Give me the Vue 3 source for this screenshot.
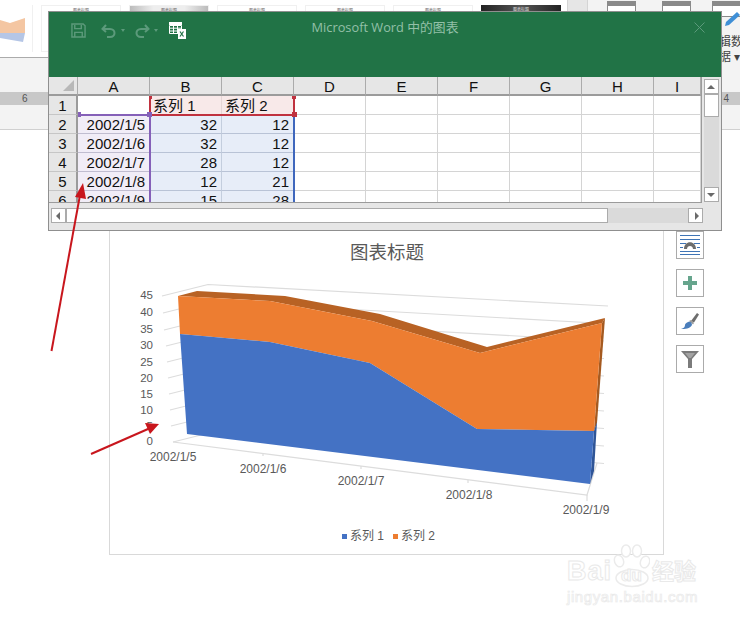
<script setup>
const columns = ['A', 'B', 'C', 'D', 'E', 'F', 'G', 'H', 'I']

const rows = [
  ['', '系列 1', '系列 2'],
  ['2002/1/5', 32, 12],
  ['2002/1/6', 32, 12],
  ['2002/1/7', 28, 12],
  ['2002/1/8', 12, 21],
  ['2002/1/9', 15, 28]
]

function cellClass(r, c) {
  const list = []
  if (r === 0 && (c === 1 || c === 2)) list.push('tint-red')
  if (r > 0 && c === 0) list.push('tint-purple')
  if (r > 0 && (c === 1 || c === 2)) list.push('tint-blue')
  if (r > 0 && c < 3) list.push('num')
  return list
}

const thumbs = [0, 1, 2, 3, 4, 5]

const wallLines = [0, 1, 2, 3, 4, 5, 6, 7, 8, 9]
const yLabels = [
  ['45', 299], ['40', 316], ['35', 333], ['30', 349], ['25', 366],
  ['20', 382], ['15', 398], ['10', 414], ['5', 430], ['0', 445]
]
const yTicks = [
  [162, 296], [163, 313], [164, 330], [166, 346], [167, 362],
  [168, 378], [169, 394], [170, 410], [171, 426], [173, 442]
]
const xLabels = [
  ['2002/1/5', 173, 461], ['2002/1/6', 263, 473], ['2002/1/7', 361, 485],
  ['2002/1/8', 469, 499], ['2002/1/9', 586, 514]
]
</script>

<template>
  <div class="page">
    <!-- ribbon behind the dialog -->
    <div class="ribbon">
      <div class="gallery">
        <div class="thumb first">
          <svg width="33" height="47" viewBox="0 0 33 47">
            <polygon points="0,15 10,18 25,13 25,28 0,28" fill="#f4c6a2" />
            <polygon points="0,28 25,28 23,37 0,33" fill="#b5c6e6" />
          </svg>
        </div>
        <div v-for="t in thumbs" :key="t" class="thumb" :class="{ grey: t === 1, dark: t === 5 }">
          <span>图表标题</span>
        </div>
      </div>
      <div class="ribbon-right">
        <div class="gallery-scroll"><i class="mini-up"></i></div>
        <div class="tool tool-a"><i class="tool-icon"></i></div>
        <div class="tool tool-b"><i class="tool-icon"></i></div>
        <div class="tool tool-c">
          <i class="tool-icon"></i>
          <svg class="pencil" width="17" height="16" viewBox="0 0 17 16">
            <path d="M13 1l3 3L5 14l-4 1 1-4z" fill="#3f8fd6" />
          </svg>
          <span class="tool-label">辑数</span>
          <span class="tool-label">据 ▾</span>
        </div>
      </div>
    </div>
    <div class="ruler">
      <span class="ruler-left">6</span>
      <span class="ruler-right">4</span>
    </div>
    <div class="ribbon-under"></div>

    <!-- document with the chart -->
    <div class="doc">
      <div class="chart-card">
        <svg class="chart" width="553" height="353" viewBox="110 201 553 353">
          <!-- back wall and floor -->
          <g stroke="#dcdcdc" stroke-width="1.2" fill="none">
            <polyline v-for="i in wallLines" :key="i" :points="`${yTicks[i][0]},${yTicks[i][1]} ${yTicks[i][0] + 46},${yTicks[i][1] - 11.5} ${i ? 604 : 608},${306 + i * 17.5}`" />
            <polyline points="173,442 587,495 597,463" />
            <polyline points="263,453 263,456" />
            <polyline points="361,466 361,469" />
            <polyline points="468,480 468,483" />
            <polyline points="587,495 587,501" />
          </g>
          <!-- series -->
          <polygon points="178,296 197,291 285,296 380,314 487,347 605,318 602,323 480,353 372,321 270,301" fill="#b86224" />
          <polygon points="605,318 597,423 594,431 602,323" fill="#a55a20" />
          <polygon points="594,431 597,422 594,471 590,484" fill="#2f5597" />
          <polygon points="178,296 270,301 372,321 480,353 602,323 594,431 477,429 370,363 270,342 180,334" fill="#ed7d31" />
          <polygon points="180,334 270,342 370,363 477,429 594,431 590,484 187,434" fill="#4472c4" />
          <!-- labels -->
          <text x="387" y="259" class="chart-title" text-anchor="middle">图表标题</text>
          <text v-for="l in yLabels" :key="l[0]" :x="153" :y="l[1]" class="tick-y" text-anchor="end">{{ l[0] }}</text>
          <text v-for="l in xLabels" :key="l[0]" :x="l[1]" :y="l[2]" class="tick" text-anchor="middle">{{ l[0] }}</text>
          <rect x="342" y="534" width="5" height="5" fill="#4472c4" />
          <text x="350" y="540" class="tick">系列 1</text>
          <rect x="393" y="534" width="5" height="5" fill="#ed7d31" />
          <text x="401" y="540" class="tick">系列 2</text>
        </svg>
      </div>

      <div class="side-buttons">
        <button class="side-btn">
          <svg width="22" height="22" viewBox="0 0 22 22">
            <path d="M1 1.500h20M1 5.500h20M1 9.500h6M15 9.500h6M1 13.500h3M18 13.500h3M1 17.500h20M1 20.500h20" stroke="#3f74b5" stroke-width="1" fill="none" />
            <path d="M5 15c0-9 12-9 12 0h-3c0-4-6-4-6 0z" fill="#6d6d6d" />
          </svg>
        </button>
        <button class="side-btn">
          <svg width="16" height="16" viewBox="0 0 16 16">
            <path d="M6 1h4v5h5v4h-5v5H6v-5H1V6h5z" fill="#66a58d" />
          </svg>
        </button>
        <button class="side-btn">
          <svg width="20" height="20" viewBox="0 0 20 20">
            <path d="M11 10L17 2l2 1.500-5 8z" fill="#6d6d6d" />
            <path d="M9 10l2-1 3 3-1 1.500z" fill="#9a9a9a" />
            <path d="M8 11c2-1 4 0 4 3-2 4-7 4-11 4 3-1 4-2 4-4 0-1 1-2 3-3z" fill="#4a7ebb" />
          </svg>
        </button>
        <button class="side-btn">
          <svg width="20" height="20" viewBox="0 0 20 20">
            <path d="M1 2h18l-7 8v9H8v-9z" fill="#7b7b7b" />
            <path d="M5 4l4 5h2l4-5z" fill="#a3a3a3" />
          </svg>
        </button>
      </div>
    </div>

    <!-- excel data window -->
    <div class="dialog">
      <div class="titlebar">
        <div class="quick">
          <svg width="15" height="15" viewBox="0 0 16 16">
            <path d="M1 1h12l2 2v12H1zM4 2v4h7V2M4 15v-5h8v5" fill="none" stroke="#5c9a7b" stroke-width="1.500" />
          </svg>
          <svg class="undo" width="16" height="14" viewBox="0 0 16 14">
            <path d="M5 1L1.500 5 5 8M2 5h7c6 0 6 8 0 8H6" fill="none" stroke="#5c9a7b" stroke-width="2" />
          </svg>
          <i class="caret"></i>
          <svg class="redo" width="16" height="14" viewBox="0 0 16 14">
            <path d="M11 1l3.500 4L11 8M14 5H7c-6 0-6 8 0 8h3" fill="none" stroke="#5c9a7b" stroke-width="2" />
          </svg>
          <i class="caret"></i>
          <svg class="sheet-icon" width="17" height="17" viewBox="0 0 17 17">
            <path d="M0 0h13v3H0z" fill="#fff" />
            <path d="M.5 3.500h12v8H.5zM.5 6.200h12M.5 9h12M4.500 3.500v8M8.500 3.500v8" fill="none" stroke="#fff" />
            <rect x="9" y="7" width="8" height="10" fill="#fff" />
            <path d="M11 9.500l3.500 5M14.500 9.500l-3.500 5" stroke="#217346" stroke-width="1.200" />
          </svg>
        </div>
        <div class="win-title">Microsoft Word 中的图表</div>
        <svg class="close" width="11" height="11" viewBox="0 0 11 11">
          <path d="M.5.5l10 10M10.500.5l-10 10" stroke="#5c9a7b" stroke-width="1" />
        </svg>
      </div>

      <div class="sheet-row">
        <div class="sheet">
          <div class="grid">
            <div class="corner"><i></i></div>
            <div v-for="c in columns" :key="c" class="col-head">{{ c }}</div>
            <template v-for="(row, r) in rows" :key="r">
              <div class="row-head">{{ r + 1 }}</div>
              <div v-for="(c, ci) in columns" :key="c" class="cell" :class="cellClass(r, ci)">{{ row[ci] }}</div>
            </template>
          </div>
          <!-- chart data ranges -->
          <div class="range purple"></div>
          <div class="range red"></div>
          <div class="range blue"></div>
          <i class="handle h-purple-l"></i>
          <i class="handle h-purple"></i>
          <i class="handle h-red-tl"></i>
          <i class="handle h-red-tr"></i>
          <i class="handle h-red"></i>
        </div>
        <div class="vscroll">
          <div class="sbtn"><i class="tri up"></i></div>
          <div class="vthumb"></div>
          <div class="strack"></div>
          <div class="sbtn"><i class="tri down"></i></div>
        </div>
      </div>

      <div class="hscroll">
        <div class="sbtn"><i class="tri left"></i></div>
        <div class="hthumb"></div>
        <div class="htrack"></div>
        <div class="sbtn"><i class="tri right"></i></div>
      </div>
    </div>

    <!-- annotation arrows -->
    <svg class="arrows" width="740" height="621" viewBox="0 0 740 621">
      <g stroke="#c8161d" stroke-width="2" fill="#c8161d">
        <line x1="51.500" y1="351" x2="80" y2="195" />
        <polygon points="83,183 75,197 86,199" stroke="none" />
        <line x1="91" y1="454" x2="148" y2="429" />
        <polygon points="159,424 145,423 150,434" stroke="none" />
      </g>
    </svg>

    <!-- watermark -->
    <div class="watermark">
      <div class="wm-top">
        <span class="wm-bai">Bai</span>
        <span class="wm-paw">
          <svg width="38" height="44" viewBox="0 0 38 44">
            <g fill="#fff" stroke="#ebebeb" stroke-width="1.500">
              <ellipse cx="7" cy="17" rx="4.500" ry="6" transform="rotate(-20 7 17)" />
              <ellipse cx="14" cy="7" rx="4.500" ry="6" />
              <ellipse cx="25" cy="7" rx="4.500" ry="6" />
              <ellipse cx="33" cy="18" rx="4.500" ry="6" transform="rotate(20 33 18)" />
              <ellipse cx="20" cy="34" rx="16" ry="8.500" />
            </g>
          </svg>
          <span class="wm-du">du</span>
        </span>
        <span class="wm-cn">经验</span>
      </div>
      <div class="wm-url">jingyan.baidu.com</div>
    </div>
  </div>
</template>

<style>
html,
body {
  margin: 0;
  background: #fff;
}
</style>

<style scoped>
.page {
  position: relative;
  width: 740px;
  height: 621px;
  overflow: hidden;
  background: #fff;
  font-family: "Liberation Sans", "Noto Sans CJK SC", sans-serif;
}

/* ribbon */
.ribbon {
  height: 92px;
  display: flex;
  justify-content: space-between;
  align-items: flex-start;
  background: #f3f3f3;
}

.gallery {
  display: flex;
  gap: 8px;
  padding-top: 5px;
  height: 58px;
  width: 567px;
  box-sizing: border-box;
  background: #fff;
  border-bottom: 1px solid #ababab;
}

.thumb {
  flex: none;
  width: 80px;
  height: 47px;
  box-sizing: border-box;
  border: 1px solid #f0f0f0;
  text-align: center;
  font-size: 4px;
  color: #666;
  line-height: 9px;
}

.thumb.first {
  width: 33px;
  border: 0;
  border-right: 1px solid #f0f0f0;
}

.thumb.grey {
  background: linear-gradient(90deg, #bbb, #eee 30%, #eee 70%, #bbb);
}

.thumb.dark {
  background: linear-gradient(90deg, #222, #555 50%, #222);
  color: #ddd;
  border: 0;
}

.ribbon-right {
  flex: none;
  width: 173px;
  height: 92px;
  position: relative;
  display: flex;
  background: #f3f3f3;
}

.gallery-scroll {
  flex: none;
  width: 21px;
  height: 58px;
  position: relative;
  background: #e6e6e6;
  border-right: 1px solid #d4d4d4;
  border-left: 1px solid #d4d4d4;
  box-sizing: border-box;
}

.mini-up {
  position: absolute;
  left: 6px;
  top: 8px;
  width: 0;
  height: 0;
  border: 3px solid transparent;
  border-bottom: 3px solid #bbb;
}

.tool {
  position: relative;
  flex: none;
  width: 29px;
  padding-top: 1px;
}

.tool-a {
  margin-left: 19px;
}

.tool-b {
  margin-left: 26px;
}

.tool-c {
  margin-left: 21px;
  font-size: 12px;
  color: #444;
  line-height: 15px;
  white-space: nowrap;
}

.tool-icon {
  display: block;
  height: 11px;
  box-sizing: border-box;
  background: linear-gradient(#8a8a8a 4px, #fff 4px);
  border: 1px solid #8a8a8a;
}

.tool-c .tool-icon {
  height: 16px;
}

.pencil {
  position: absolute;
  left: 12px;
  top: 11px;
}

.tool-label {
  display: block;
  overflow: hidden;
  margin-left: 7px;
}

.tool-label:first-of-type {
  margin-top: 18px;
}

.ruler {
  height: 13px;
  display: flex;
  justify-content: space-between;
  background: #c8c8c8;
  font-size: 10px;
  line-height: 13px;
  color: #555;
}

.ruler-left {
  margin-left: 22px;
}

.ruler-right {
  margin-right: 11px;
}

.ribbon-under {
  height: 25px;
  background: #f3f3f3;
  border-bottom: 1px solid #d0d0d0;
  box-sizing: border-box;
}

/* chart area */
.doc {
  display: flex;
  align-items: flex-start;
  padding-left: 109px;
  margin-top: 70px;
}

.chart-card {
  width: 555px;
  height: 355px;
  box-sizing: border-box;
  border: 1px solid #d9d9d9;
  background: #fff;
  flex: none;
}

.chart {
  display: block;
}

.chart-title {
  font-size: 18.500px;
  fill: #595959;
}

.tick {
  font-size: 12px;
  fill: #595959;
}

.tick-y {
  font-size: 11.500px;
  fill: #595959;
}

.side-buttons {
  display: flex;
  flex-direction: column;
  gap: 10px;
  margin: 31px 0 0 12px;
}

.side-btn {
  width: 28px;
  height: 28px;
  padding: 0;
  box-sizing: border-box;
  border: 1px solid #ababab;
  background: #fff;
  display: flex;
  align-items: center;
  justify-content: center;
}

/* dialog */
.dialog {
  position: absolute;
  left: 48px;
  top: 11px;
  width: 674px;
  height: 220px;
  box-sizing: border-box;
  border: 1px solid #8f8f8f;
  background: #e6e6e6;
}

.titlebar {
  position: relative;
  height: 65px;
  background: #217346;
  display: flex;
  justify-content: center;
  color: #93c0a8;
}

.quick {
  position: absolute;
  left: 22px;
  top: 10px;
  display: flex;
  align-items: center;
}

.undo {
  margin-left: 15px;
}

.redo {
  margin-left: 9px;
}

.caret {
  width: 0;
  height: 0;
  margin-left: 4px;
  border: 2.500px solid transparent;
  border-top: 3px solid #5c9a7b;
  border-bottom: 0;
}

.sheet-icon {
  margin-left: 11px;
}

.win-title {
  font-family: "Open Sans", "Noto Sans CJK SC", sans-serif;
  font-size: 12.800px;
  line-height: 30px;
}

.close {
  position: absolute;
  right: 16px;
  top: 10px;
}

.sheet-row {
  display: flex;
}

.sheet {
  position: relative;
  width: 653px;
  height: 126px;
  overflow: hidden;
  box-sizing: border-box;
  border-right: 1px solid #9b9b9b;
  border-bottom: 1px solid #9b9b9b;
  background: #fff;
}

.grid {
  display: grid;
  grid-template-columns: 29px repeat(8, 72px) 47px;
  grid-template-rows: 19px repeat(6, 19px);
  font-size: 15px;
  line-height: 20px;
  color: #111;
}

.corner,
.col-head,
.row-head {
  box-sizing: border-box;
  background: #e6e6e6;
  text-align: center;
}

.corner {
  position: relative;
  border-right: 1px solid #ababab;
  border-bottom: 2px solid #9b9b9b;
}

.corner i {
  position: absolute;
  right: 3px;
  bottom: 3px;
  width: 0;
  height: 0;
  border-left: 11px solid transparent;
  border-bottom: 11px solid #b8b8b8;
}

.col-head {
  border-right: 1px solid #ababab;
  border-bottom: 2px solid #9b9b9b;
}

.row-head {
  border-right: 2px solid #9b9b9b;
  border-bottom: 1px solid #c6c6c6;
}

.cell {
  box-sizing: border-box;
  border-right: 1px solid #d4d4d4;
  border-bottom: 1px solid #d4d4d4;
  padding: 0 4px 0 3px;
  white-space: nowrap;
  overflow: hidden;
}

.num {
  text-align: right;
}

.tint-red {
  background: #f8e9e9;
  text-align: left;
  border-color: #f8e9e9 #e5d5d5;
}

.tint-purple {
  background: #f1edf7;
  border-bottom-color: #c0bdd0;
}

.tint-blue {
  background: #e7edf8;
  border-right-color: #c4cede;
  border-bottom-color: #b9c3d6;
}

.range {
  position: absolute;
  box-sizing: border-box;
}

.range.purple {
  left: 30px;
  top: 37px;
  width: 72px;
  height: 100px;
  border-top: 2px solid #8560b8;
  border-right: 2px solid #8560b8;
}

.range.red {
  left: 100px;
  top: 19px;
  width: 146px;
  height: 20px;
  border-left: 2px solid #c0323f;
  border-right: 2px solid #c0323f;
  border-bottom: 2px solid #c0323f;
}

.range.blue {
  left: 102px;
  top: 39px;
  width: 144px;
  height: 100px;
  border-right: 2px solid #3f67bd;
}

.handle {
  position: absolute;
  display: block;
}

.h-purple-l {
  left: 29px;
  top: 35px;
  width: 3px;
  height: 5px;
  background: #8560b8;
}

.h-purple {
  left: 98px;
  top: 35px;
  width: 5px;
  height: 5px;
  background: #8560b8;
}

.h-red-tl {
  left: 100px;
  top: 19px;
  width: 3px;
  height: 3px;
  background: #c0323f;
}

.h-red-tr {
  left: 243px;
  top: 19px;
  width: 4px;
  height: 3px;
  background: #c0323f;
}

.h-red {
  left: 243px;
  top: 35px;
  width: 5px;
  height: 5px;
  background: #c0323f;
}

.vscroll {
  margin: 2px 0 0 2px;
  width: 15px;
  height: 123px;
  display: flex;
  flex-direction: column;
  background: #dadada;
}

.sbtn {
  position: relative;
  flex: none;
  width: 15px;
  height: 15px;
  box-sizing: border-box;
  border: 1px solid #ababab;
  background: #fff;
}

.vthumb {
  flex: none;
  height: 23px;
  box-sizing: border-box;
  border: 1px solid #ababab;
  background: #fff;
}

.strack {
  flex: 1;
}

.hscroll {
  margin: 5px 0 0 2px;
  width: 652px;
  height: 15px;
  display: flex;
  background: #dadada;
}

.hthumb {
  width: 542px;
  box-sizing: border-box;
  border: 1px solid #ababab;
  background: #fff;
  flex: none;
}

.htrack {
  flex: 1;
}

.tri {
  position: absolute;
  width: 0;
  height: 0;
  border: 4px solid transparent;
}

.tri.up {
  left: 2px;
  top: 1px;
  border-bottom: 4px solid #6a6a6a;
}

.tri.down {
  left: 2px;
  top: 5px;
  border-top: 4px solid #6a6a6a;
}

.tri.left {
  left: 0;
  top: 2.500px;
  border-right: 4px solid #6a6a6a;
}

.tri.right {
  left: 6px;
  top: 2.500px;
  border-left: 4px solid #6a6a6a;
}

.arrows {
  position: absolute;
  left: 0;
  top: 0;
  pointer-events: none;
}

/* watermark */
.watermark {
  position: absolute;
  left: 567px;
  top: 546px;
  width: 135px;
  color: #fff;
}

.wm-top {
  display: flex;
  align-items: flex-end;
  height: 40px;
}

.wm-bai,
.wm-cn,
.wm-du,
.wm-url {
  -webkit-text-stroke: 1px #e9e9e9;
}

.wm-bai {
  font-size: 27px;
  font-weight: 700;
  line-height: 30px;
  letter-spacing: 1px;
}

.wm-paw {
  position: relative;
  width: 38px;
  height: 42px;
  margin-left: 0;
  flex: none;
}

.wm-paw svg {
  display: block;
}

.wm-du {
  position: absolute;
  left: 9px;
  top: 22px;
  font-size: 17px;
  font-weight: 700;
  line-height: 20px;
}

.wm-cn {
  margin-left: 2px;
  font-size: 22px;
  font-weight: 700;
  line-height: 28px;
  white-space: nowrap;
}

.wm-url {
  margin-top: 4px;
  font-size: 15px;
  line-height: 14px;
  letter-spacing: 0.600px;
  white-space: nowrap;
  -webkit-text-stroke-width: 0.700px;
}
</style>
